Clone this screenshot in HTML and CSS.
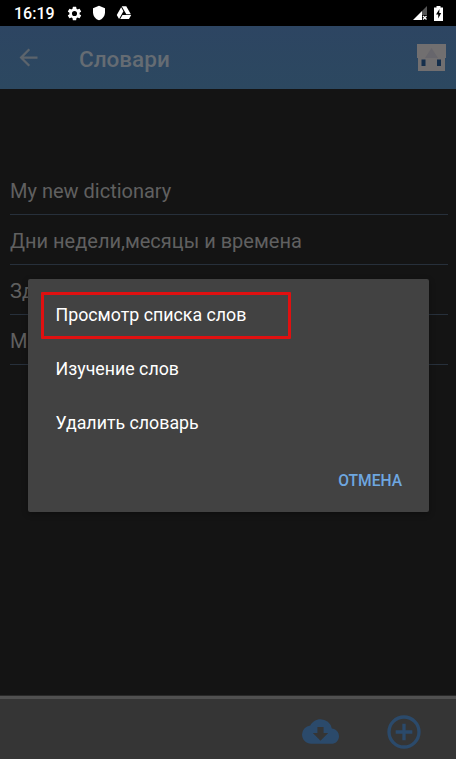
FILE: index.html
```html
<!DOCTYPE html>
<html lang="ru">
<head>
<meta charset="utf-8">
<title>Словари</title>
<link rel="stylesheet" href="styles.css">
</head>
<body>
<div class="screen">
  <div class="status">
    <span class="clock">16:19</span>
    <svg class="gear" viewBox="0 0 24 24"><path d="M19.14 12.94c.04-.3.06-.61.06-.94s-.02-.64-.07-.94l2.03-1.58a.5.5 0 0 0 .12-.61l-1.92-3.32a.49.49 0 0 0-.59-.22l-2.39.96a7 7 0 0 0-1.62-.94l-.36-2.54A.48.48 0 0 0 13.92 2.400h-3.840a.48.48 0 0 0-.47.410l-.36 2.540c-.59.240-1.130.570-1.620.940l-2.390-.960a.49.49 0 0 0-.590.220L2.740 8.870a.48.48 0 0 0 .12.610l2.030 1.580c-.05.300-.09.630-.09.940s.02.640.07.940l-2.030 1.580a.5.5 0 0 0-.12.610l1.920 3.320c.12.220.370.290.590.220l2.390-.960c.5.380 1.030.700 1.620.940l.36 2.540c.05.240.240.410.480.410h3.840c.24 0 .44-.17.47-.41l.36-2.540c.59-.24 1.130-.56 1.620-.94l2.390.960c.22.080.470 0 .590-.220l1.920-3.320a.48.48 0 0 0-.12-.61zM12 15.6a3.6 3.6 0 1 1 0-7.2 3.6 3.6 0 0 1 0 7.200z"/></svg>
    <svg class="shield" viewBox="0 0 24 24"><path d="M12 1 3 5v6c0 5.550 3.840 10.740 9 12 5.160-1.260 9-6.450 9-12V5z"/></svg>
    <svg class="drive" viewBox="0 0 24 24"><path d="M7.710 3.500 1.150 15l3.430 6 6.550-11.500zM9.730 15 6.300 21h13.120l3.430-6zM22.280 14 15.420 2H8.580l6.850 12z"/></svg>
    <svg class="signal" viewBox="0 0 14 14"><path d="M0 14 9 5v9z"/><path class="faint" d="M9 5 14 0v9H9z"/><path class="cross" d="m10 10 3.500 3.500m0-3.500L10 13.500"/></svg>
    <svg class="battery" viewBox="0 0 9 15"><path d="M2.500 0h4v1.500H9V15H0V1.500h2.500z"/><path class="bolt" d="M5.500 3 2 8.600h2.200V12.500L7.200 7H5.200z"/></svg>
  </div>
  <header class="bar">
    <svg class="back" viewBox="0 0 24 24"><path d="M20 11H7.830l5.590-5.590L12 4l-8 8 8 8 1.410-1.410L7.830 13H20z"/></svg>
    <h1>Словари</h1>
    <svg class="home" viewBox="0 0 29 27"><path class="wall" d="M0 0h29v14h-1v13H1V14H0z"/><path class="gable" d="M14.500 4 8 14h13z"/><path class="window" d="M4.500 15.500h4v6.500h-4zM20 15.500h4v6.500h-4z"/></svg>
  </header>
  <ul class="list">
    <li>My new dictionary</li>
    <li>Дни недели,месяцы и времена</li>
    <li>Зд</li>
    <li>М</li>
  </ul>
  <footer class="tools">
    <svg class="cloud" viewBox="0 0 24 24"><path d="M19.350 10.040A7.490 7.490 0 0 0 12 4C9.110 4 6.600 5.640 5.350 8.040A5.994 5.994 0 0 0 0 14c0 3.310 2.690 6 6 6h13c2.760 0 5-2.240 5-5 0-2.640-2.050-4.780-4.650-4.960zM17 13l-5 5-5-5h3V9h4v4z"/></svg>
    <svg class="add" viewBox="0 0 24 24"><path d="M13 7h-2v4H7v2h4v4h2v-4h4v-2h-4zM12 2a10 10 0 1 0 0 20 10 10 0 0 0 0-20zm0 18a8 8 0 1 1 0-16 8 8 0 0 1 0 16z"/></svg>
  </footer>
  <div class="dialog">
    <div class="option marked">Просмотр списка слов</div>
    <div class="option">Изучение слов</div>
    <div class="option">Удалить словарь</div>
    <div class="actions">ОТМЕНА</div>
  </div>
</div>
</body>
</html>
```
FILE: styles.css
```css
* { box-sizing: border-box; }
body { margin: 0; background: #141414; font-family: Roboto, "Liberation Sans", sans-serif; }
svg { display: block; flex: none; }
.screen { position: relative; display: flex; flex-direction: column; height: 759px; overflow: hidden; }

.status { display: flex; align-items: center; height: 26px; padding: 0 13px 0 14px; background: #000; color: #fff; fill: #fff; }
.clock { width: 52px; font-size: 16px; font-weight: 500; line-height: 26px; padding-top: 2px; }
.gear { width: 17px; height: 17px; }
.shield { width: 16px; height: 16px; margin-left: 8px; }
.drive { width: 16px; height: 16px; margin-left: 9px; }
.signal { width: 14px; height: 14px; margin-left: auto; }
.faint { fill: #555; }
.cross { fill: none; stroke: #fff; stroke-width: 1.300; }
.battery { width: 9px; height: 15px; margin-left: 7px; }
.bolt { fill: #000; }

.bar { display: flex; align-items: center; height: 63px; padding: 0 10px 0 15px; background: linear-gradient(#2d4562, #2c4860); }
.back { width: 27px; height: 27px; fill: #5c646c; }
.bar h1 { flex: 1; margin: 2px 0 0 37px; font-size: 22.500px; font-weight: 500; line-height: 30px; color: #656c73; }
.home { width: 29px; height: 27px; }
.wall { fill: #716f70; }
.gable { fill: #67666c; }
.window { fill: #152f4c; }

.list { flex: 1; margin: 0; padding: 76px 8px 0 10px; list-style: none; }
.list li { height: 50px; border-bottom: 1px solid #27303b; font-size: 20px; line-height: 53px; color: #606060; }

.tools { display: flex; align-items: center; justify-content: flex-end; height: 64px; padding: 8px 32px 0 0; border-top: 1px solid #292929; background: linear-gradient(#505050 3px, #353535 3px); fill: #2b4a6b; }
.cloud { width: 37px; height: 37px; }
.add { width: 40px; height: 40px; margin-left: 45px; }

.dialog { position: absolute; left: 28px; top: 279px; width: 401px; height: 233px; padding: 13px 13px 0; border-radius: 2px; background: #424242; box-shadow: 0 2px 6px rgba(0, 0, 0, .3); }
.option { height: 47px; margin-bottom: 7px; padding-left: 14.500px; font-size: 17.800px; line-height: 45px; color: #fff; }
.marked { width: 250px; border: 3px solid #e01010; border-radius: 1px; padding-left: 11.500px; line-height: 39px; }
.actions { padding: 15px 14px 0 0; text-align: right; font-size: 15.600px; font-weight: 500; line-height: 25px; color: #6ea7e0; }
```
